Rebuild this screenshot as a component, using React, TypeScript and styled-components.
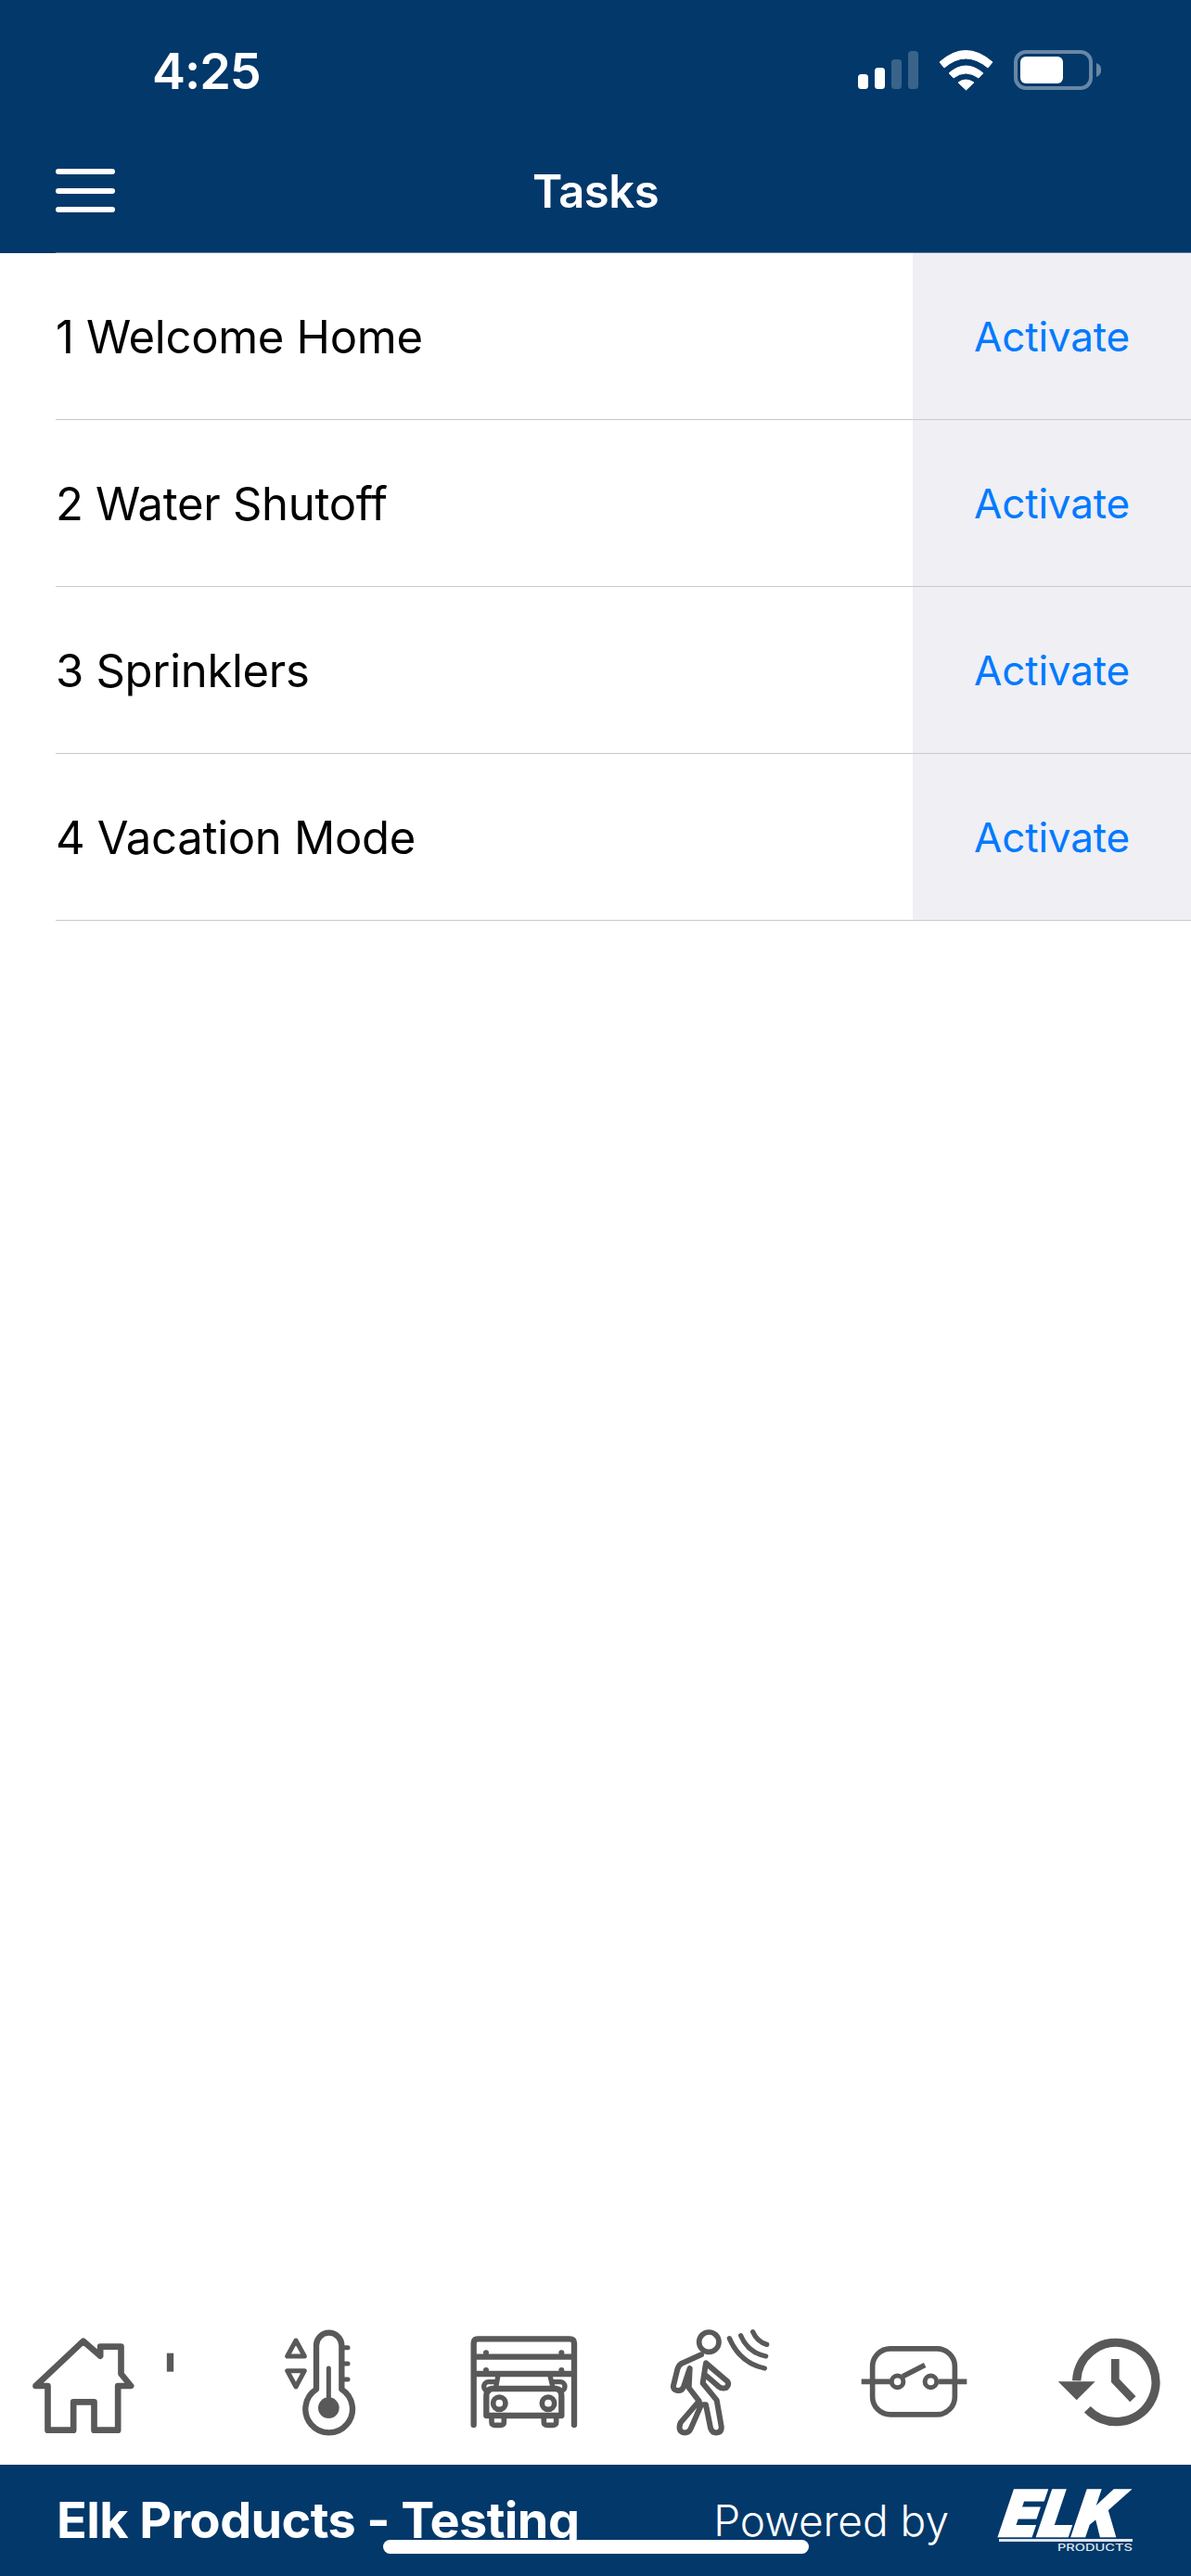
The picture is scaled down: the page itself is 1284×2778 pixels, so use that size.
import React from "react";
import styled, { createGlobalStyle } from "styled-components";

const NAVY = "#03386a";
const ICON = "#595959";

const Global = createGlobalStyle`
  html, body { margin: 0; padding: 0; background: #fff; }
  #root { width: 1284px; height: 2778px; }
  * { box-sizing: border-box; }
`;

const Screen = styled.div`
  position: relative;
  width: 1284px;
  height: 2778px;
  display: flex;
  flex-direction: column;
  background: #fff;
  font-family: Inter, "Liberation Sans", sans-serif;
  overflow: hidden;
`;

const Header = styled.header`
  height: 273px;
  background: ${NAVY};
  display: flex;
  flex-direction: column;
  color: #fff;
  flex: none;
`;

const StatusBar = styled.div`
  height: 148px;
  display: flex;
  align-items: flex-start;
  justify-content: space-between;
  padding: 54px 97px 0 164px;
`;

const Clock = styled.span`
  font-size: 54px;
  font-weight: 600;
  line-height: 46px;
  letter-spacing: -1px;
`;

const StatusIcons = styled.svg`
  width: 262px;
  height: 44px;
  display: block;
`;

const NavBar = styled.div`
  position: relative;
  flex: 1;
  display: flex;
  align-items: flex-start;
  justify-content: center;
`;

const Title = styled.h1`
  margin: 29px 0 0;
  font-size: 49px;
  font-weight: 600;
  line-height: 60px;
  letter-spacing: -0.5px;
`;

const Burger = styled.div`
  position: absolute;
  left: 60px;
  top: 34px;
  width: 64px;
  display: flex;
  flex-direction: column;
  gap: 14.5px;
`;

const BurgerBar = styled.span`
  height: 6px;
  border-radius: 3px;
  background: #fff;
`;

const List = styled.main`
  flex: 1;
`;

const Row = styled.div`
  height: 180px;
  margin-left: 60px;
  display: flex;
  align-items: stretch;
  border-bottom: 1.5px solid #c9c8cd;
  &:first-child {
    box-shadow: 0 -1px 0 #5f7d9b;
  }
`;

const RowLabel = styled.div`
  flex: 1;
  display: flex;
  align-items: center;
  padding-top: 2px;
  font-size: 49px;
  letter-spacing: -0.3px;
  color: #000;
`;

const Action = styled.div`
  width: 300px;
  background: #efeff4;
  display: flex;
  align-items: center;
  justify-content: center;
  font-size: 44px;
  letter-spacing: -0.2px;
  color: #007aff;
`;

const TabBar = styled.nav`
  height: 150px;
  flex: none;
  display: flex;
  padding-left: 33px;
`;

const TabIcon = styled.svg<{ $gap: number }>`
  height: 150px;
  flex: none;
  margin-left: ${(p) => p.$gap}px;
  display: block;
  color: ${ICON};
`;

const Footer = styled.footer`
  height: 120px;
  flex: none;
  background: ${NAVY};
  color: #fff;
  display: flex;
  align-items: flex-start;
  padding: 26px 63px 0 61px;
`;

const Brand = styled.span`
  margin-top: 4px;
  font-size: 54px;
  font-weight: 700;
  line-height: 60px;
  letter-spacing: -0.6px;
  white-space: nowrap;
`;

const Powered = styled.span`
  margin-top: 4px;
  margin-left: auto;
  font-size: 46px;
  font-weight: 300;
  line-height: 60px;
  white-space: nowrap;
`;

const Logo = styled.svg`
  width: 144px;
  height: 68px;
  margin-left: 54px;
  display: block;
  overflow: visible;
`;

const LogoMark = styled.text`
  font-family: Inter, "Liberation Sans", sans-serif;
  font-size: 68px;
  font-weight: 900;
  font-style: italic;
  fill: #fff;
  stroke: #fff;
  stroke-width: 2.5px;
`;

const LogoSub = styled.text`
  font-family: Inter, "Liberation Sans", sans-serif;
  font-size: 10px;
  font-weight: 500;
  fill: #dfe6ee;
`;

const HomeIndicator = styled.div`
  position: absolute;
  left: 413px;
  top: 2739px;
  width: 459px;
  height: 15px;
  border-radius: 8px;
  background: #fff;
`;

const tasks = ["1 Welcome Home", "2 Water Shutoff", "3 Sprinklers", "4 Vacation Mode"];

const line = {
  fill: "none",
  stroke: "currentColor",
  strokeLinecap: "round",
  strokeLinejoin: "round",
} as const;

export default function App() {
  return (
    <Screen>
      <Global />
      <Header>
        <StatusBar>
          <Clock>4:25</Clock>
          <StatusIcons viewBox="925 54 262 44">
            <rect x="925" y="80" width="11" height="16" rx="3.5" fill="#fff" />
            <rect x="943" y="73" width="11" height="23" rx="3.5" fill="#fff" />
            <rect x="961" y="64" width="11" height="32" rx="3.5" fill="#fff" opacity=".22" />
            <rect x="979" y="55" width="11" height="41" rx="3.5" fill="#fff" opacity=".22" />
            <path d="M1013 67 Q1041 42 1070 67 L1065 73 Q1041 53 1018 73 Z" fill="#fff" stroke="#fff" strokeWidth="1" strokeLinejoin="round" />
            <path d="M1023 79 Q1041 63 1060 79 L1055 84 Q1041 74 1028 84 Z" fill="#fff" stroke="#fff" strokeWidth="1" strokeLinejoin="round" />
            <path d="M1033 89 Q1041 83 1050 89 L1041.5 97 Z" fill="#fff" stroke="#fff" strokeWidth="1" strokeLinejoin="round" />
            <rect x="1095" y="56" width="81" height="39" rx="11" fill="none" stroke="#fff" strokeOpacity=".4" strokeWidth="4" />
            <rect x="1100" y="61" width="46" height="29" rx="6" fill="#fff" />
            <path d="M1182 68 A8 8 0 0 1 1182 83 Z" fill="#fff" fillOpacity=".4" />
          </StatusIcons>
        </StatusBar>
        <NavBar>
          <Burger>
            <BurgerBar />
            <BurgerBar />
            <BurgerBar />
          </Burger>
          <Title>Tasks</Title>
        </NavBar>
      </Header>

      <List>
        {tasks.map((t) => (
          <Row key={t}>
            <RowLabel>{t}</RowLabel>
            <Action>Activate</Action>
          </Row>
        ))}
      </List>

      <TabBar>
        {/* home, with the stray tick mark beside it */}
        <TabIcon $gap={0} width={157} viewBox="100 84 470 450">
          <path {...line} strokeWidth="20" d="M155 279 H116 L270 134 L325 182 V152 H392 V240 L424 279 H382 V422 H305 V331 H238 V422 H155 Z" />
          <rect x="540" y="173" width="22" height="60" fill="currentColor" />
        </TabIcon>
        {/* thermostat */}
        <TabIcon $gap={116} width={78} viewBox="915 84 234 450">
          <path {...line} strokeWidth="19" d="M1020 290 V148 A41 41 0 0 1 1102 148 V290 A76 76 0 1 1 1020 290 Z" />
          <circle cx="1060" cy="350" r="34" fill="currentColor" />
          <path {...line} strokeWidth="15" d="M1060 222 V340 M1110 155 H1122 M1110 207 H1122 M1110 258 H1122" />
          <path {...line} strokeWidth="15" d="M954 132 L926 183 H982 Z M926 230 H982 L954 282 Z" />
        </TabIcon>
        {/* garage */}
        <TabIcon $gap={122} width={117} viewBox="196 84 351 450">
          <path {...line} strokeWidth="19" d="M210 405 V140 Q210 127 225 127 H520 Q535 127 535 140 V405 M210 185 H535 M210 240 H535" />
          <circle cx="250" cy="172" r="9" fill="currentColor" />
          <circle cx="494" cy="172" r="9" fill="currentColor" />
          <circle cx="250" cy="228" r="9" fill="currentColor" />
          <circle cx="494" cy="228" r="9" fill="currentColor" />
          <path {...line} strokeWidth="19" d="M251 375 V310 Q251 290 270 288 H476 Q494 290 494 310 V375 Z" />
          <path {...line} strokeWidth="16" d="M288 250 L281 288 M458 250 L467 288 M280 266 H258 A15 15 0 0 0 258 296 M468 266 H490 A15 15 0 0 1 490 296" />
          <circle cx="293" cy="335" r="20" {...line} strokeWidth="17" />
          <circle cx="451" cy="335" r="20" {...line} strokeWidth="17" />
          <path {...line} strokeWidth="17" d="M268 385 V396 Q268 406 280 406 H296 Q308 406 308 396 V385 M437 385 V396 Q437 406 449 406 H465 Q477 406 477 396 V385" />
        </TabIcon>
        {/* motion */}
        <TabIcon $gap={98} width={111} viewBox="840 84 333 450">
          <circle cx="970" cy="137" r="32" {...line} strokeWidth="17" />
          <path {...line} strokeWidth="18" d="M945 178 L882 206 Q872 212 868 225 L855 278 Q853 292 868 294 Q882 296 888 282 L908 222 L905 285 L938 328 L878 398 Q868 425 888 430 Q905 432 912 415 L945 340 L960 340 L975 415 Q980 432 997 430 Q1012 428 1010 410 L995 325 L950 270 L960 205 L1030 265 Q1036 275 1026 285 Q1012 290 1000 280 L960 245" />
          <path {...line} strokeWidth="16" d="M1036 125 Q1070 205 1150 222 M1073 116 Q1095 170 1154 183 M1112 104 Q1125 135 1157 145" />
        </TabIcon>
        {/* output switch */}
        <TabIcon $gap={96} width={115} viewBox="202 84 346 450">
          <rect x="240" y="158" width="267" height="214" rx="58" fill="none" stroke="currentColor" strokeWidth="17" />
          <path fill="none" stroke="currentColor" strokeWidth="17" d="M204 265 H297 M455 265 H546 M338 248 L410 211" />
          <circle cx="321" cy="265" r="19" fill="none" stroke="currentColor" strokeWidth="15" />
          <circle cx="429" cy="265" r="19" fill="none" stroke="currentColor" strokeWidth="15" />
        </TabIcon>
        {/* history */}
        <TabIcon $gap={97} width={112} viewBox="828 84 336 450">
          <path fill="none" stroke="currentColor" strokeWidth="28" d="M925 355 A128 128 0 1 0 890 262" />
          <path fill="currentColor" d="M830 265 H950 L890 325 Z" />
          <path fill="none" stroke="currentColor" strokeWidth="26" d="M1015 192 V262 L1072 322" />
        </TabIcon>
      </TabBar>

      <Footer>
        <Brand>Elk Products - Testing</Brand>
        <Powered>Powered by</Powered>
        <Logo viewBox="0 0 144 68">
          <LogoMark x="9" y="51" textLength="129" lengthAdjust="spacingAndGlyphs" transform="skewX(-10)">ELK</LogoMark>
          <rect x="0" y="54" width="144" height="3" fill="#dfe6ee" />
          <LogoSub x="63" y="67" textLength="81" lengthAdjust="spacingAndGlyphs">PRODUCTS</LogoSub>
        </Logo>
      </Footer>
      <HomeIndicator />
    </Screen>
  );
}
